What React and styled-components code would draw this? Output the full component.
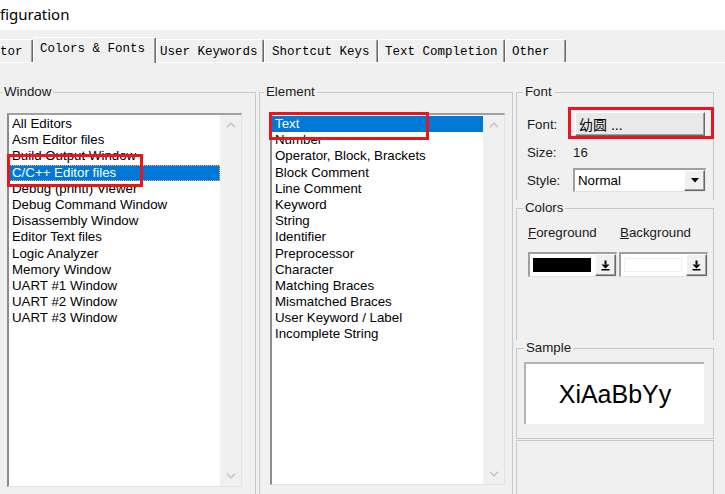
import styled, { createGlobalStyle } from "styled-components";

const GlobalStyle = createGlobalStyle`
  html, body {
    margin: 0;
    padding: 0;
    background: #f0f0f0;
  }
  body {
    font-family: "Liberation Sans", Arial, sans-serif;
    font-size: 13.3px;
    color: #000;
  }
  #root {
    width: 725px;
    height: 494px;
    overflow: hidden;
  }
`;

const Dialog = styled.div`
  width: 725px;
  height: 494px;
  display: flex;
  flex-direction: column;
  overflow: hidden;
  background: #f0f0f0;
`;

const TitleBar = styled.div`
  flex: none;
  height: 30px;
  box-sizing: border-box;
  padding-bottom: 2px;
  display: flex;
  align-items: center;
  background: #fff;
  font-family: "Noto Sans", "Open Sans", sans-serif;
  font-size: 15px;
  color: #000;
`;

const TabStrip = styled.div`
  flex: none;
  height: 33px;
  box-sizing: border-box;
  display: flex;
  align-items: flex-end;
  border-bottom: 1px solid #fff;
`;

const Tab = styled.div`
  position: relative;
  z-index: ${(p) => (p.$active ? 1 : 0)};
  box-sizing: border-box;
  flex: none;
  width: ${(p) => p.$w}px;
  height: ${(p) => (p.$active ? 26 : 23)}px;
  margin-bottom: ${(p) => (p.$active ? -1 : 0)}px;
  padding: ${(p) => (p.$active ? 4 : 5)}px 0 0 ${(p) => p.$pad}px;
  background: #f0f0f0;
  border-top: 1px solid #fff;
  border-left: ${(p) => (p.$cut ? "none" : "1px solid #fff")};
  border-right: 1px solid #696969;
  box-shadow: inset -1px 0 #a0a0a0;
  border-radius: 2px 2px 0 0;
  font-family: "Liberation Mono", "Courier New", monospace;
  font-size: 12.5px;
  line-height: 14px;
  white-space: pre;
  color: #000;
`;

const Panel = styled.div`
  flex: 1;
  display: grid;
  grid-template-columns: 266px 254px 198px;
  column-gap: 3px;
  align-items: start;
  margin-left: -10px;
  padding-top: 21px;
`;

const Group = styled.fieldset`
  margin: 0;
  padding: 0 0 ${(p) => p.$bottom || 0}px ${(p) => p.$inset || 0}px;
  min-width: 0;
  border: 1px solid #c8c8c8;
  border-bottom: ${(p) => (p.$closed ? "1px solid #c8c8c8" : "none")};
  height: ${(p) => (p.$tall ? "440px" : "auto")};
`;

const GroupLabel = styled.legend`
  margin-left: ${(p) => p.$indent}px;
  padding: 0 2px;
  font-size: 13.3px;
  line-height: 16px;
  color: #1a1a1a;
`;

const ListBox = styled.div`
  position: relative;
  box-sizing: border-box;
  display: flex;
  width: 235px;
  height: ${(p) => p.$h}px;
  margin: 13px 0 0 ${(p) => p.$left}px;
  background: #fff;
  border-top: 2px solid #a0a0a0;
  border-left: 2px solid #8c8c8c;
  border-right: 1px solid #e3e3e3;
  border-bottom: 1px solid #e3e3e3;
`;

const Items = styled.div`
  flex: 1;
  padding-top: 1px;
  min-width: 0;
`;

const Item = styled.div`
  box-sizing: border-box;
  height: 16.2px;
  line-height: 16px;
  padding-left: 3px;
  white-space: nowrap;
  font-size: 13.3px;
  color: ${(p) => (p.$selected ? "#fff" : "#000")};
  background: ${(p) => (p.$selected ? "#0078d7" : "transparent")};
  outline: ${(p) => (p.$focus ? "1px dotted #ffb45a" : "none")};
  outline-offset: -1px;
`;

const ScrollTrack = styled.div`
  flex: none;
  width: 21px;
  display: flex;
  flex-direction: column;
  justify-content: space-between;
  background: #f0f0f0;
`;

const ArrowCell = styled.div`
  height: 20px;
  display: flex;
  align-items: center;
  justify-content: center;
`;

const Highlight = styled.div`
  position: absolute;
  z-index: 3;
  box-sizing: border-box;
  left: ${(p) => p.$x}px;
  top: ${(p) => p.$y}px;
  width: ${(p) => p.$w}px;
  height: ${(p) => p.$h}px;
  border: 3px solid #e8161e;
  pointer-events: none;
`;

const RightColumn = styled.div`
  display: flex;
  flex-direction: column;
`;

const FontRows = styled.div`
  display: grid;
  grid-template-columns: 46px 1fr;
  grid-template-rows: 24px 22px 24px;
  row-gap: 5px;
  align-items: center;
  margin-top: 12px;
  padding-left: 10px;
  padding-bottom: 8px;
`;

const FieldLabel = styled.span`
  font-size: 13.3px;
  color: #1a1a1a;
`;

const FontButton = styled.div`
  position: relative;
  box-sizing: border-box;
  width: 130px;
  height: 24px;
  margin-left: 2px;
  padding-left: 3px;
  display: flex;
  align-items: center;
  background: #e9e9e9;
  border-top: 1px solid #fff;
  border-left: 1px solid #fff;
  border-right: 1px solid #696969;
  border-bottom: 1px solid #696969;
  box-shadow: inset -1px -1px #a0a0a0;
  font-family: "Liberation Sans", "Noto Sans CJK SC", sans-serif;
  font-size: 14px;
  color: #000;
`;

const Select = styled.div`
  box-sizing: border-box;
  width: 133px;
  height: 24px;
  display: flex;
  align-items: stretch;
  background: #fff;
  border-top: 2px solid #a0a0a0;
  border-left: 2px solid #a0a0a0;
  border-right: 1px solid #e3e3e3;
  border-bottom: 1px solid #e3e3e3;
`;

const SelectValue = styled.span`
  flex: 1;
  padding-left: 3px;
  display: flex;
  align-items: center;
  font-size: 13.3px;
`;

const DropButton = styled.span`
  box-sizing: border-box;
  flex: none;
  width: ${(p) => p.$w}px;
  display: flex;
  align-items: center;
  justify-content: center;
  background: #f0f0f0;
  border-top: 1px solid #fff;
  border-left: 1px solid #fff;
  border-right: 1px solid #696969;
  border-bottom: 1px solid #696969;
  box-shadow: inset -1px -1px #a0a0a0;
`;

const ColorGrid = styled.div`
  display: grid;
  grid-template-columns: 89px 89px;
  column-gap: 2px;
  row-gap: 11px;
  margin-top: 9px;
  padding-left: 11px;
  padding-bottom: 63px;
`;

const ColorLabel = styled.span`
  padding-left: ${(p) => p.$shift || 0}px;
  font-size: 13.3px;
  line-height: 16px;
  color: #1a1a1a;
`;

const Mnemonic = styled.span`
  text-decoration: underline;
`;

const ColorCombo = styled.div`
  box-sizing: border-box;
  height: 25px;
  display: flex;
  background: #fff;
  border-top: 2px solid #a0a0a0;
  border-left: 2px solid #a0a0a0;
  border-right: 1px solid #e3e3e3;
  border-bottom: 1px solid #e3e3e3;
`;

const SwatchWell = styled.div`
  flex: 1;
  display: flex;
  padding: 4px 4px 4px 3px;
`;

const Swatch = styled.div`
  flex: 1;
  box-sizing: border-box;
  background: ${(p) => p.$color};
  border: 1px solid ${(p) => (p.$color === "#fff" ? "#f0f0f0" : p.$color)};
`;

const SampleBox = styled.div`
  box-sizing: border-box;
  width: 180px;
  height: 62px;
  margin: 6px 0 0 7px;
  display: flex;
  align-items: center;
  justify-content: center;
  background: #fff;
  border-top: 2px solid #b4b4b4;
  border-left: 2px solid #b4b4b4;
  font-family: "Liberation Sans", Arial, sans-serif;
  font-size: 25px;
  color: #000;
`;

const EmptyBox = styled.div`
  height: 80px;
  margin-top: 1px;
  border: 1px solid #c8c8c8;
  border-bottom: none;
`;

const Chevron = ({ up }) => (
  <svg width="10" height="6" viewBox="0 0 10 6">
    <path
      d={up ? "M1 5.2 L5 1.2 L9 5.2" : "M1 0.8 L5 4.8 L9 0.8"}
      fill="none"
      stroke="#c6c6c6"
      strokeWidth="1.6"
    />
  </svg>
);

const DownToBar = () => (
  <svg width="9" height="11" viewBox="0 0 9 11">
    <rect x="3.5" y="0.5" width="2" height="4" fill="#000" />
    <path d="M0.5 4.5 L8.5 4.5 L4.5 8.5 Z" fill="#000" />
    <rect x="0.5" y="9" width="8" height="1.5" fill="#000" />
  </svg>
);

const DownTriangle = () => (
  <svg width="8" height="5" viewBox="0 0 8 5">
    <path d="M0 0 L8 0 L4 4.5 Z" fill="#000" />
  </svg>
);

const tabs = [
  { label: "tor", w: 33, pad: 0, cut: true },
  { label: "Colors & Fonts", w: 123, pad: 6, active: true },
  { label: "User Keywords", w: 108, pad: 3 },
  { label: "Shortcut Keys", w: 114, pad: 7 },
  { label: "Text Completion", w: 127, pad: 6 },
  { label: "Other", w: 61, pad: 6 },
];

const windows = [
  "All Editors",
  "Asm Editor files",
  "Build Output Window",
  "C/C++ Editor files",
  "Debug (printf) Viewer",
  "Debug Command Window",
  "Disassembly Window",
  "Editor Text files",
  "Logic Analyzer",
  "Memory Window",
  "UART #1 Window",
  "UART #2 Window",
  "UART #3 Window",
];

const elements = [
  "Text",
  "Number",
  "Operator, Block, Brackets",
  "Block Comment",
  "Line Comment",
  "Keyword",
  "String",
  "Identifier",
  "Preprocessor",
  "Character",
  "Matching Braces",
  "Mismatched Braces",
  "User Keyword / Label",
  "Incomplete String",
];

const List = ({ items, selected, focus, h, left, mark }) => (
  <ListBox $h={h} $left={left}>
    <Items>
      {items.map((name, i) => (
        <Item key={name} $selected={i === selected} $focus={focus && i === selected}>
          {name}
        </Item>
      ))}
    </Items>
    <ScrollTrack>
      <ArrowCell>
        <Chevron up />
      </ArrowCell>
      <ArrowCell>
        <Chevron />
      </ArrowCell>
    </ScrollTrack>
    <Highlight $x={mark.x} $y={mark.y} $w={mark.w} $h={mark.h} />
  </ListBox>
);

export default function App() {
  return (
    <Dialog>
      <GlobalStyle />
      <TitleBar>figuration</TitleBar>
      <TabStrip>
        {tabs.map((t) => (
          <Tab key={t.label} $w={t.w} $pad={t.pad} $active={t.active} $cut={t.cut}>
            {t.label}
          </Tab>
        ))}
      </TabStrip>
      <Panel>
        <Group $tall>
          <GroupLabel $indent={11}>Window</GroupLabel>
          <List
            items={windows}
            selected={3}
            focus
            h={374}
            left={16}
            mark={{ x: -2, y: 39, w: 136, h: 33 }}
          />
        </Group>

        <Group $tall>
          <GroupLabel $indent={4}>Element</GroupLabel>
          <List
            items={elements}
            selected={0}
            h={372}
            left={10}
            mark={{ x: -3, y: -3, w: 160, h: 28 }}
          />
        </Group>

        <RightColumn>
          <Group>
            <GroupLabel $indent={6}>Font</GroupLabel>
            <FontRows>
              <FieldLabel>Font:</FieldLabel>
              <FontButton>
                幼圆 ...
                <Highlight $x={-8} $y={-6} $w={146} $h={32} />
              </FontButton>
              <FieldLabel>Size:</FieldLabel>
              <FieldLabel>16</FieldLabel>
              <FieldLabel>Style:</FieldLabel>
              <Select>
                <SelectValue>Normal</SelectValue>
                <DropButton $w={21}>
                  <DownTriangle />
                </DropButton>
              </Select>
            </FontRows>
          </Group>

          <Group>
            <GroupLabel $indent={6}>Colors</GroupLabel>
            <ColorGrid>
              <ColorLabel>
                <Mnemonic>F</Mnemonic>oreground
              </ColorLabel>
              <ColorLabel $shift={1}>
                <Mnemonic>B</Mnemonic>ackground
              </ColorLabel>
              <ColorCombo>
                <SwatchWell>
                  <Swatch $color="#000" />
                </SwatchWell>
                <DropButton $w={21}>
                  <DownToBar />
                </DropButton>
              </ColorCombo>
              <ColorCombo>
                <SwatchWell>
                  <Swatch $color="#fff" />
                </SwatchWell>
                <DropButton $w={21}>
                  <DownToBar />
                </DropButton>
              </ColorCombo>
            </ColorGrid>
          </Group>

          <Group $closed $bottom={14}>
            <GroupLabel $indent={7}>Sample</GroupLabel>
            <SampleBox>XiAaBbYy</SampleBox>
          </Group>

          <EmptyBox />
        </RightColumn>
      </Panel>
    </Dialog>
  );
}
